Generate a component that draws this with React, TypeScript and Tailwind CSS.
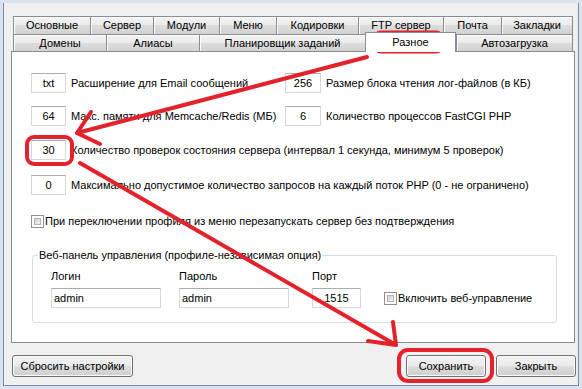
import React from "react";

const tabCls =
  "flex items-center justify-center border-l border-t border-[#898c95] bg-[linear-gradient(to_bottom,#f3f3f3,#ebebeb_50%,#dddddd_50%,#d2d2d2)] shadow-[inset_1px_1px_0_#fbfbfb]";

const row1 = [
  { label: "Основные", w: "w-[77px]" },
  { label: "Сервер", w: "w-[63px]" },
  { label: "Модули", w: "w-[66px]" },
  { label: "Меню", w: "w-[57px]" },
  { label: "Кодировки", w: "w-[82px]" },
  { label: "FTP сервер", w: "w-[85px]" },
  { label: "Почта", w: "w-[58px]" },
  { label: "Закладки", w: "w-[72px] border-r" },
];

function Box({ w, children }: { w: string; children: React.ReactNode }) {
  return (
    <div
      className={`${w} flex h-[20px] shrink-0 items-center justify-center border border-[#d5d8de] border-t-[#abadb3] bg-white`}
    >
      {children}
    </div>
  );
}

function Check() {
  return (
    <div className="h-[13px] w-[13px] shrink-0 border border-[#8e8f8f] bg-white p-[2px]">
      <div className="h-full w-full border border-[#b3b3b3] bg-[linear-gradient(135deg,#cfcfcf,#f4f4f4)]" />
    </div>
  );
}

const btnCls =
  "flex h-[22px] items-center justify-center rounded-[3px] border border-[#707070] bg-[linear-gradient(to_bottom,#f2f2f2,#ebebeb_50%,#dddddd_50%,#cfcfcf)] shadow-[inset_0_0_0_1px_#fcfcfc]";

export default function App() {
  return (
    <div className="relative h-[389px] w-[582px] overflow-hidden bg-[#dae4f0] px-[3px] pb-[3px] pt-[3px] font-['Liberation_Sans',Arial,sans-serif] text-[11px] leading-[13px] text-black">
      <div className="flex h-full flex-col border-x border-b border-[#7b8ba0] bg-[#f0f0f0]">
        <div className="ml-[7px] mt-[13px] w-[564px]">
          <div className="flex h-[18px] pl-[2px]">
            {row1.map((t) => (
              <div key={t.label} className={`${tabCls} ${t.w}`}>
                {t.label}
              </div>
            ))}
          </div>
          <div className="flex h-[17px] items-end pl-[2px]">
            <div className={`${tabCls} h-[17px] w-[93px]`}>Домены</div>
            <div className={`${tabCls} h-[17px] w-[93px]`}>Алиасы</div>
            <div className={`${tabCls} h-[17px] w-[166px]`}>Планировщик заданий</div>
            <div className="relative z-10 -mb-[1px] flex h-[20px] w-[91px] items-start justify-center border-x border-t border-[#898c95] bg-white pt-[3px]">
              Разное
            </div>
            <div className={`${tabCls} h-[17px] w-[117px] border-r`}>Автозагрузка</div>
          </div>
          <div className="h-[292px] border border-[#898c95] bg-white pl-[19px] pt-[21px]">
            <div className="flex">
              <div className="flex w-[254px] items-center gap-[5px]">
                <Box w="w-[35px]">txt</Box>
                <span>Расширение для Email сообщений</span>
              </div>
              <div className="flex items-center gap-[5px]">
                <Box w="w-[36px]">256</Box>
                <span>Размер блока чтения лог-файлов (в КБ)</span>
              </div>
            </div>
            <div className="mt-[13px] flex">
              <div className="flex w-[254px] items-center gap-[5px]">
                <Box w="w-[35px]">64</Box>
                <span>Макс. памяти для Memcache/Redis (МБ)</span>
              </div>
              <div className="flex items-center gap-[5px]">
                <Box w="w-[36px]">6</Box>
                <span>Количество процессов FastCGI PHP</span>
              </div>
            </div>
            <div className="mt-[14px] flex items-center gap-[5px]">
              <Box w="w-[35px]">30</Box>
              <span>Количество проверок состояния сервера (интервал 1 секунда, минимум 5 проверок)</span>
            </div>
            <div className="mt-[15px] flex items-center gap-[5px]">
              <Box w="w-[35px]">0</Box>
              <span>Максимально допустимое количество запросов на каждый поток PHP (0 - не ограничено)</span>
            </div>
            <div className="mt-[20px] flex items-center gap-[1px]">
              <Check />
              <span>При переключении профиля из меню перезапускать сервер без подтверждения</span>
            </div>
            <fieldset className="ml-[1px] mt-[21px] w-[525px] rounded-[3px] border border-[#d5dfe5] pb-[14px] pt-[8px]">
              <legend className="ml-[5px] px-[1px]">Веб-панель управления (профиле-независимая опция)</legend>
              <div className="flex pl-[18px]">
                <div className="flex w-[110px] flex-col">
                  <span>Логин</span>
                  <div className="mt-[5px] flex h-[20px] items-center border border-[#d5d8de] border-t-[#abadb3] bg-white pl-[2px]">
                    admin
                  </div>
                </div>
                <div className="ml-[18px] flex w-[110px] flex-col">
                  <span>Пароль</span>
                  <div className="mt-[5px] flex h-[20px] items-center border border-[#d5d8de] border-t-[#abadb3] bg-white pl-[2px]">
                    admin
                  </div>
                </div>
                <div className="ml-[23px] flex w-[49px] flex-col">
                  <span>Порт</span>
                  <div className="mt-[5px] flex h-[20px] items-center justify-center border border-[#d5d8de] border-t-[#abadb3] bg-white">
                    1515
                  </div>
                </div>
                <div className="ml-[23px] flex h-[20px] items-center gap-[1px] self-end">
                  <Check />
                  <span>Включить веб-управление</span>
                </div>
              </div>
            </fieldset>
          </div>
        </div>
        <div className="mt-[12px] flex justify-between pl-[8px] pr-[2px]">
          <div className={`${btnCls} w-[121px]`}>Сбросить настройки</div>
          <div className="flex gap-[10px]">
            <div className={`${btnCls} w-[80px]`}>Сохранить</div>
            <div className={`${btnCls} w-[80px]`}>Закрыть</div>
          </div>
        </div>
      </div>
      <svg
        className="pointer-events-none absolute left-0 top-0"
        width="582"
        height="389"
        viewBox="0 0 582 389"
        fill="none"
        stroke="#e3222b"
        strokeWidth="4"
        strokeLinecap="round"
        strokeLinejoin="round"
      >
        <rect x="375" y="32.5" width="67" height="19" rx="6" />
        <rect x="27" y="137" width="45" height="27" rx="7" />
        <rect x="399" y="350" width="93" height="31" rx="9" />
        <path d="M367 57 L77 133 M91 112 L77 133 L100 144" />
        <path d="M80 163 L396 345 M393 322 L396 345 L368 341" />
      </svg>
    </div>
  );
}
